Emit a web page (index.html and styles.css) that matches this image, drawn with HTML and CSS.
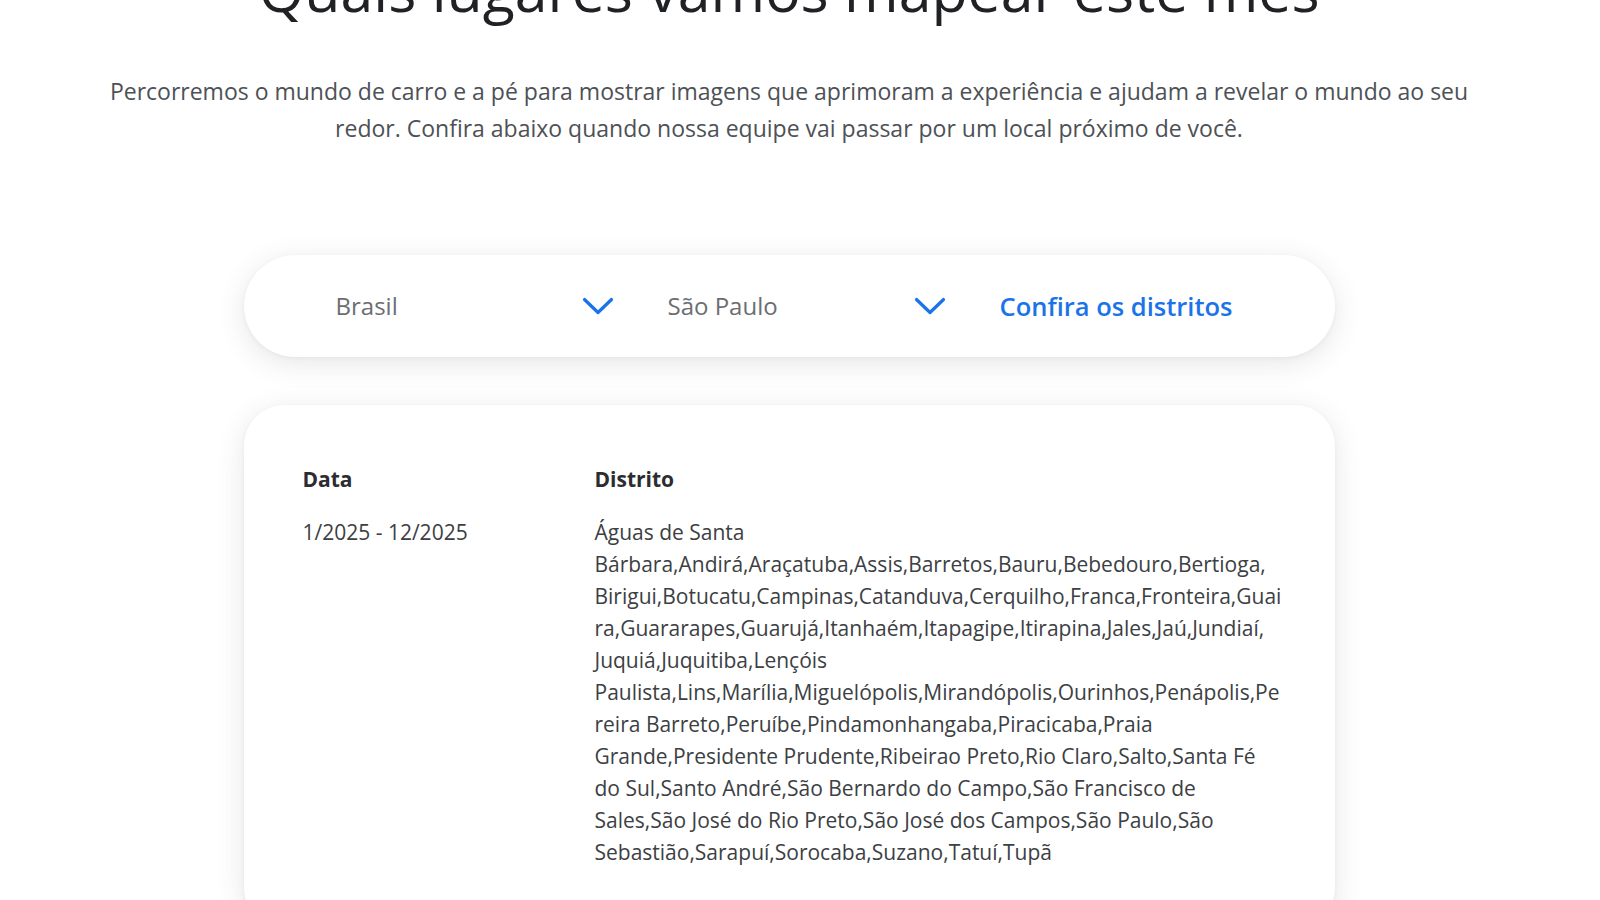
FILE: index.html
```html
<!DOCTYPE html>
<html lang="pt-BR">
<head>
<meta charset="utf-8">
<title>Street View – Quais lugares vamos mapear este mês</title>
<link rel="stylesheet" href="styles.css">
</head>
<body>
<main class="page">
  <h1 class="title">Quais lugares vamos mapear este mês</h1>
  <p class="lead">Percorremos o mundo de carro e a pé para mostrar imagens que aprimoram a experiência e ajudam a revelar o mundo ao seu<br>redor. Confira abaixo quando nossa equipe vai passar por um local próximo de você.</p>

  <div class="filter-bar">
    <div class="select">
      <span class="select-label">Brasil</span>
      <svg class="chevron" viewBox="0 0 32 18" width="32" height="18" aria-hidden="true"><path d="M2.5 2.5 L16 15.5 L29.5 2.5"/></svg>
    </div>
    <div class="select">
      <span class="select-label">São Paulo</span>
      <svg class="chevron" viewBox="0 0 32 18" width="32" height="18" aria-hidden="true"><path d="M2.5 2.5 L16 15.5 L29.5 2.5"/></svg>
    </div>
    <a class="districts-link" href="#">Confira os distritos</a>
  </div>

  <section class="card">
    <div class="schedule">
      <div class="col-head">Data</div>
      <div class="col-head">Distrito</div>
      <div class="cell-date">1/2025 - 12/2025</div>
      <div class="cell-districts">Águas de Santa<br>Bárbara,Andirá,Araçatuba,Assis,Barretos,Bauru,Bebedouro,Bertioga,<br>Birigui,Botucatu,Campinas,Catanduva,Cerquilho,Franca,Fronteira,Guai<br>ra,Guararapes,Guarujá,Itanhaém,Itapagipe,Itirapina,Jales,Jaú,Jundiaí,<br>Juquiá,Juquitiba,Lençóis<br>Paulista,Lins,Marília,Miguelópolis,Mirandópolis,Ourinhos,Penápolis,Pe<br>reira Barreto,Peruíbe,Pindamonhangaba,Piracicaba,Praia<br>Grande,Presidente Prudente,Ribeirao Preto,Rio Claro,Salto,Santa Fé<br>do Sul,Santo André,São Bernardo do Campo,São Francisco de<br>Sales,São José do Rio Preto,São José dos Campos,São Paulo,São<br>Sebastião,Sarapuí,Sorocaba,Suzano,Tatuí,Tupã</div>
    </div>
  </section>
</main>
</body>
</html>
```

FILE: styles.css
```css
* { box-sizing: border-box; }

html, body {
  margin: 0;
  padding: 0;
  background: #ffffff;
  overflow: hidden;
}

body {
  font-family: "Open Sans", "Noto Sans", "DejaVu Sans", sans-serif;
  color: #3c4043;
}

.page {
  width: 1578px;
  display: flex;
  flex-direction: column;
  align-items: center;
}

.title {
  margin: -48px 0 0 0;
  font-size: 59px;
  line-height: 74px;
  font-weight: 400;
  color: #202124;
  letter-spacing: 0;
  white-space: nowrap;
}

.lead {
  margin: 47px 0 0 0;
  font-size: 23px;
  line-height: 37px;
  color: #4d5156;
  text-align: center;
  white-space: nowrap;
}

.filter-bar {
  margin-top: 108px;
  width: 1091px;
  height: 102px;
  border-radius: 51px;
  background: #ffffff;
  box-shadow: 0 6px 28px rgba(60, 64, 67, 0.13), 0 1px 4px rgba(60, 64, 67, 0.05);
  display: flex;
  align-items: center;
  padding: 0 90px 0 92px;
  gap: 54px;
}

.select {
  width: 278px;
  display: flex;
  align-items: center;
  justify-content: space-between;
}

.select-label {
  font-size: 24px;
  line-height: 32px;
  color: #6b6e72;
}

.chevron {
  display: block;
  fill: none;
  stroke: #1a73e8;
  stroke-width: 3.2;
  stroke-linecap: round;
  stroke-linejoin: round;
}

.districts-link {
  font-size: 25.5px;
  line-height: 32px;
  font-weight: 600;
  color: #1a73e8;
  text-decoration: none;
  white-space: nowrap;
}

.card {
  margin-top: 48px;
  width: 1091px;
  border-radius: 40px;
  background: #ffffff;
  box-shadow: 0 6px 28px rgba(60, 64, 67, 0.13), 0 1px 4px rgba(60, 64, 67, 0.05);
  padding: 58px 59px 60px 59px;
}

.schedule {
  display: grid;
  grid-template-columns: 292px 1fr;
  row-gap: 21px;
}

.col-head {
  font-size: 21px;
  line-height: 32px;
  font-weight: 700;
  color: #2b2d30;
}

.cell-date,
.cell-districts {
  font-size: 21px;
  line-height: 32px;
  color: #3c4043;
}

.cell-districts {
  white-space: nowrap;
}
```
